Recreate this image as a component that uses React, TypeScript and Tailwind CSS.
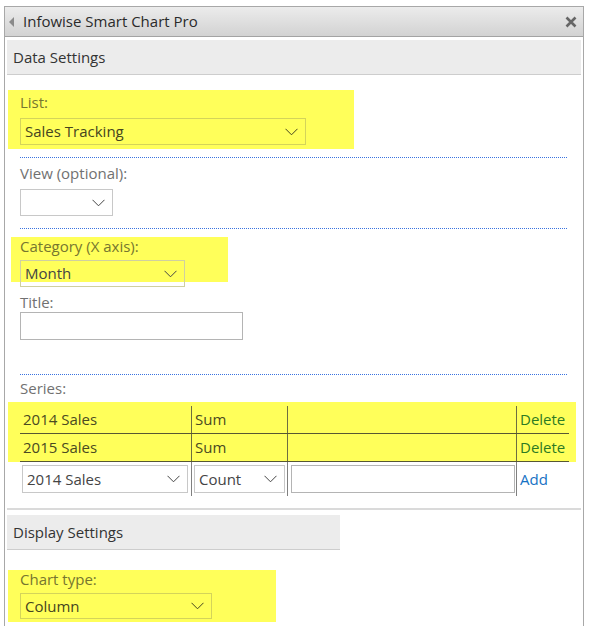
import React from 'react';

const Chevron = ({ color = '#444' }: { color?: string }) => (
    <svg width="13" height="8" viewBox="0 0 13 8" className="shrink-0">
        <path d="M0.5 0.8 L6.5 6.8 L12.5 0.8" fill="none" stroke={color} strokeWidth="1" />
    </svg>
);

type SelectProps = {
    value?: string;
    width: string;
    height: string;
    hl?: boolean;
};

// fake select box, transparent so the highlight shows through
function Select({ value = '', width, height, hl = false }: SelectProps) {
    return (
        <div
            className={`${width} ${height} border flex items-center justify-between pl-[4px] pr-[7px] text-[15px] ${
                hl ? 'border-[#d4d45a] text-[#45451f]' : 'border-[#c8c8c8] text-[#444]'
            }`}
        >
            <span>{value}</span>
            <Chevron color={hl ? '#45451f' : '#444'} />
        </div>
    );
}

// 1px on / 1px off blue dots
const Dotted = () => (
    <div className="w-[548px] h-[1px] bg-[repeating-linear-gradient(90deg,#3a73e0_0px,#3a73e0_1px,transparent_1px,transparent_2px)]"></div>
);

const SectionHeader = ({ title, width }: { title: string; width: string }) => (
    <div className={`${width} h-[35px] ml-[2px] bg-[#ececec] border-b border-[#cdcdcd] flex items-center pl-[6px] text-[15px] text-[#333]`}>
        {title}
    </div>
);

const series = [
    { name: '2014 Sales', fn: 'Sum' },
    { name: '2015 Sales', fn: 'Sum' },
];

export default function App() {
    return (
        <div className="w-[591px] h-[626px] bg-white overflow-hidden font-['Open_Sans',sans-serif]">
            <div className="ml-[4px] mt-[6px] w-[580px] h-[640px] border border-[#a8a8a8]">
                {/* title bar */}
                <div className="h-[30px] border-b border-[#a3a3a3] bg-gradient-to-b from-[#ececec] to-[#d2d2d2] flex items-center pl-[4px] pr-[6px]">
                    <svg width="6" height="10" viewBox="0 0 6 10" className="mr-[8px]">
                        <path d="M5 0 L0 5 L5 10 Z" fill="#8a8a8a" />
                    </svg>
                    <span className="text-[15px] text-[#2a2a2a] flex-1">Infowise Smart Chart Pro</span>
                    <svg width="12" height="12" viewBox="0 0 12 12">
                        <path d="M1.5 1.5 L10.5 10.5 M10.5 1.5 L1.5 10.5" stroke="#666" strokeWidth="2.6" />
                    </svg>
                </div>

                <div className="pt-[3px]">
                    <SectionHeader title="Data Settings" width="w-[574px]" />

                    <div className="pl-[15px]">
                        {/* List */}
                        <div className="-ml-[12px] mt-[15px] w-[346px] bg-[#ffff5a] pt-[3px] pb-[4px] pl-[12px]">
                            <div className="text-[15px] leading-[18px] text-[#76762f] mb-[7px]">List:</div>
                            <Select value="Sales Tracking" width="w-[286px]" height="h-[27px]" hl />
                        </div>

                        <div className="mt-[8px]">
                            <Dotted />
                        </div>

                        {/* View */}
                        <div className="mt-[6px] text-[15px] leading-[18px] text-[#717171] mb-[7px]">View (optional):</div>
                        <Select width="w-[93px]" height="h-[27px]" />

                        <div className="mt-[12px]">
                            <Dotted />
                        </div>

                        {/* Category */}
                        <div className="-ml-[9px] mt-[8px] w-[217px] h-[45px] bg-[#ffff5a] pl-[9px]">
                            <div className="text-[15px] leading-[18px] text-[#76762f] mb-[5px]">Category (X axis):</div>
                            <div className="w-[165px] h-[27px] border border-[#d0d0a0] flex items-center justify-between pl-[4px] pr-[7px] text-[15px] text-[#444]">
                                <span>Month</span>
                                <Chevron />
                            </div>
                        </div>

                        <div className="mt-[11px] text-[15px] leading-[18px] text-[#717171] mb-[1px]">Title:</div>
                        <div className="w-[223px] h-[28px] border border-[#b4b4b4]"></div>

                        <div className="mt-[34px]">
                            <Dotted />
                        </div>

                        {/* Series */}
                        <div className="mt-[4px] text-[15px] leading-[18px] text-[#717171]">Series:</div>

                        <div className="-ml-[12px] mt-[5px] w-[568px] bg-[#ffff5a] pt-[4px] pl-[12px]">
                            {series.map((s) => (
                                <div key={s.name} className="flex w-[549px] h-[28px] border-b border-[#575733] text-[15px] leading-[27px] text-[#4a4a22]">
                                    <div className="w-[171px] pl-[3px]">{s.name}</div>
                                    <div className="w-[96px] pl-[3px] border-l border-[#6e6e40]">{s.fn}</div>
                                    <div className="w-[229px] border-l border-[#6e6e40]"></div>
                                    <div className="flex-1 pl-[3px] border-l border-[#6e6e40] text-[#2c7a23]">Delete</div>
                                </div>
                            ))}
                        </div>
                        <div className="flex w-[549px] h-[34px] items-center text-[15px] text-[#444]">
                            <div className="w-[171px] pl-[2px]">
                                <Select value="2014 Sales" width="w-[166px]" height="h-[28px]" />
                            </div>
                            <div className="w-[96px] h-full flex items-center pl-[2px] border-l border-[#808080]">
                                <Select value="Count" width="w-[91px]" height="h-[28px]" />
                            </div>
                            <div className="w-[229px] h-full flex items-center pl-[3px] border-l border-[#808080]">
                                <div className="w-[224px] h-[28px] border border-[#b4b4b4]"></div>
                            </div>
                            <div className="flex-1 h-full flex items-center pl-[3px] border-l border-[#808080] text-[#1672c4]">Add</div>
                        </div>
                    </div>

                    <div className="mt-[12px] ml-[2px] w-[574px] border-t-2 border-[#dadada]"></div>

                    <div className="mt-[5px]">
                        <SectionHeader title="Display Settings" width="w-[333px]" />
                    </div>

                    {/* Chart type */}
                    <div className="ml-[3px] mt-[20px] w-[268px] bg-[#ffff5a] pb-[3px] pl-[12px]">
                        <div className="text-[15px] leading-[18px] text-[#76762f] mb-[5px]">Chart type:</div>
                        <Select value="Column" width="w-[192px]" height="h-[26px]" hl />
                    </div>
                </div>
            </div>
        </div>
    );
}
